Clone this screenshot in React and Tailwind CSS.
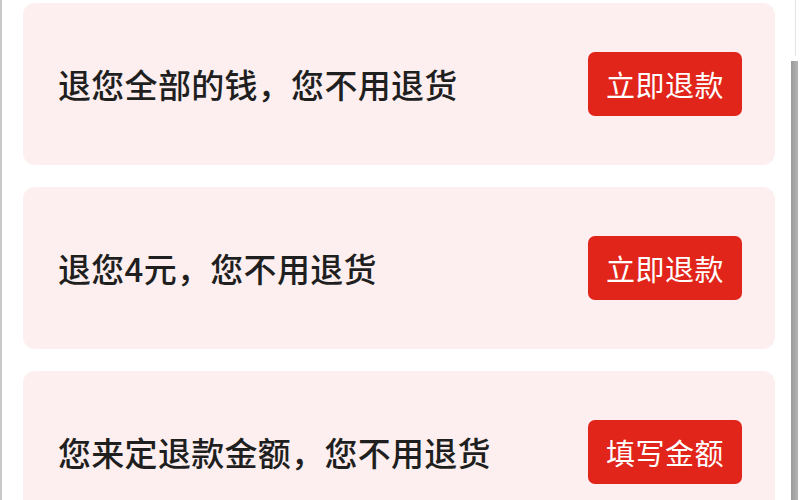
const options = [
  { text: "退您全部的钱，您不用退货", action: "立即退款" },
  { text: "退您4元，您不用退货", action: "立即退款" },
  { text: "您来定退款金额，您不用退货", action: "填写金额" },
];

const OptionCard = ({ text, action }) => {
  return (
    <div className="flex items-center justify-between h-[162px] shrink-0 rounded-[12px] bg-[#fdefef] pl-[35px] pr-[33px]">
      <span className="text-[33px] leading-none font-medium text-[#1f1f1f] tracking-[0.3px]">{text}</span>
      <button className="w-[154px] h-[64px] rounded-[7px] bg-[#e1251b] text-white text-[29px] leading-none tracking-[0.5px]">
        {action}
      </button>
    </div>
  );
};

export default function App() {
  return (
    <div
      className="relative w-[800px] h-[500px] overflow-hidden bg-white border-l-2 border-[#c9c9c9]"
      style={{ fontFamily: '"Noto Sans CJK SC", "Noto Sans", sans-serif' }}
    >
      <div className="flex flex-col gap-[22px] pt-[3px] pl-[21px] pr-[25px]">
        {options.map((o, i) => (
          <OptionCard key={i} {...o} />
        ))}
      </div>
      <div className="absolute right-[4px] top-0 h-[56px] w-px bg-[#e4e4e4]" />
      <div className="absolute right-[2px] top-[61px] bottom-0 w-[7px] bg-gradient-to-r from-[#9a9a9a] to-[#b4b4b4]" />
    </div>
  );
}
